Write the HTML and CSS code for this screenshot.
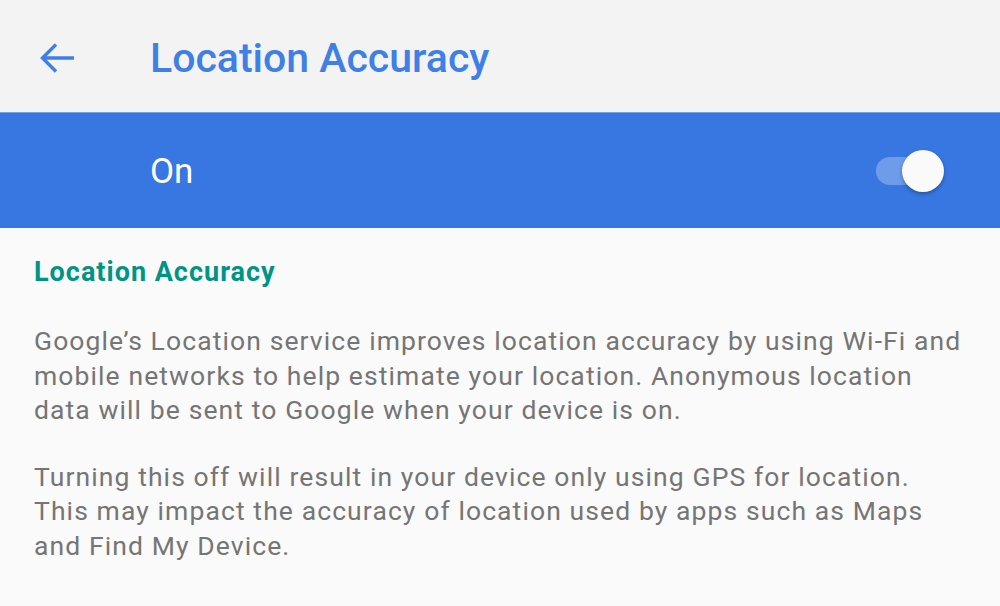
FILE: index.html
```html
<!DOCTYPE html>
<html>
<head>
<meta charset="utf-8">
<link rel="stylesheet" href="styles.css">
</head>
<body>
<div class="app">
  <header class="toolbar">
    <div class="back">
      <svg width="40" height="40" viewBox="0 0 40 40"><path d="M37 20H6M19 6.5L5.5 20L19 33.5" fill="none" stroke="#3f7fe6" stroke-width="3.4"/></svg>
    </div>
    <h1 class="title">Location Accuracy</h1>
  </header>
  <div class="master">
    <span class="master-label">On</span>
    <div class="switch">
      <div class="track"></div>
      <div class="thumb"></div>
    </div>
  </div>
  <main class="content">
    <h2 class="section">Location Accuracy</h2>
    <p class="desc">Google’s Location service improves location accuracy by using Wi-Fi and mobile networks to help estimate your location. Anonymous location data will be sent to Google when your device is on.</p>
    <p class="desc">Turning this off will result in your device only using GPS for location. This may impact the accuracy of location used by apps such as Maps and Find My Device.</p>
  </main>
</div>
</body>
</html>
```

FILE: styles.css
```css
* { box-sizing: border-box; }
html, body { margin: 0; padding: 0; }
body {
  width: 1000px;
  height: 606px;
  overflow: hidden;
  background: #fafafa;
  font-family: Roboto, "Noto Sans", sans-serif;
}
.toolbar {
  height: 113px;
  background: #f3f3f3;
  display: flex;
  align-items: center;
  border-bottom: 1px solid #74a1ea;
  padding-top: 3px;
}
.back {
  width: 150px;
  display: flex;
  padding-left: 37px;
}
.back svg { display: block; }
.title {
  margin: 0;
  font-size: 41px;
  font-weight: 500;
  color: #3f7fe6;
}
.master {
  height: 115px;
  background: #3877e2;
  display: flex;
  align-items: center;
  padding-left: 150px;
  padding-right: 56px;
}
.master-label {
  flex: 1;
  color: #ffffff;
  font-size: 35px;
  padding-top: 2px;
}
.switch {
  position: relative;
  width: 68px;
  height: 42px;
}
.track {
  position: absolute;
  left: 0;
  top: 7px;
  width: 62px;
  height: 28px;
  border-radius: 14px;
  background: rgba(255,255,255,0.28);
}
.thumb {
  position: absolute;
  right: 0;
  top: 0;
  width: 42px;
  height: 42px;
  border-radius: 50%;
  background: #fafafa;
  box-shadow: 0 2px 4px rgba(0,0,0,0.3);
}
.content {
  padding: 25px 32px 0 34px;
}
.section {
  margin: 0 0 33px 0;
  font-size: 27px;
  font-weight: 700;
  color: #009485;
  line-height: 38px;
  letter-spacing: 1px;
}
.desc {
  margin: 0 0 32px 0;
  font-size: 26.5px;
  line-height: 34.5px;
  letter-spacing: 1.1px;
  color: #757575;
}
```
